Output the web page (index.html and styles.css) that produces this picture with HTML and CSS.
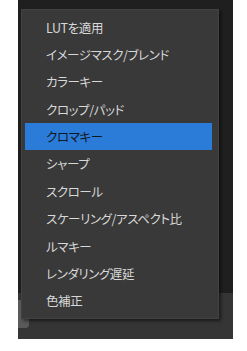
FILE: index.html
```html
<!DOCTYPE html>
<html lang="ja">
<head>
    <meta charset="UTF-8">
    <title>Effect Menu</title>
    <link rel="stylesheet" href="styles.css">
</head>
<body>
    <div class="panel">
        <div class="upper"></div>
        <div class="lower">
            <div class="tab"></div>
        </div>

        <ul class="menu">
            <li class="menu-item">LUTを適用</li>
            <li class="menu-item">イメージマスク/ブレンド</li>
            <li class="menu-item">カラーキー</li>
            <li class="menu-item">クロップ/パッド</li>
            <li class="menu-item active">クロマキー</li>
            <li class="menu-item">シャープ</li>
            <li class="menu-item">スクロール</li>
            <li class="menu-item">スケーリング/アスペクト比</li>
            <li class="menu-item">ルマキー</li>
            <li class="menu-item">レンダリング遅延</li>
            <li class="menu-item">色補正</li>
        </ul>
    </div>
</body>
</html>
```

FILE: styles.css
```css
body {
    margin: 0;
    background-color: #ffffff;
    font-family: "Noto Sans CJK JP", "Noto Sans", sans-serif;
}
.panel {
    position: relative;
    margin-left: 18px;
    width: 215px;
    height: 339px;
    display: flex;
    flex-direction: column;
}
.upper {
    height: 293px;
    background-color: #1f1f1f;
}
.lower {
    flex: 1;
    background-color: #353535;
    padding-top: 7px;
}
.tab {
    width: 11px;
    height: 28px;
    background-color: #5a5a5a;
    border-radius: 0 0 4px 0;
}
/* popup menu sits over the panel */
.menu {
    position: absolute;
    top: 9px;
    left: 3px;
    width: 198px;
    margin: 0;
    padding: 3.5px 6px 3.5px 3px;
    box-sizing: border-box;
    list-style: none;
    background-color: #393939;
    border: 1px solid #424242;
    box-shadow: 2px 2px 3px rgba(0, 0, 0, 0.5);
}
.menu-item {
    height: 27.4px;
    line-height: 27.4px;
    padding-left: 21px;
    font-size: 12.5px;
    letter-spacing: -0.4px;
    color: #d8d8d8;
    font-feature-settings: "palt";
    white-space: nowrap;
}
.menu-item.active {
    background-color: #2b7bd9;
    color: #101820;
}
```
